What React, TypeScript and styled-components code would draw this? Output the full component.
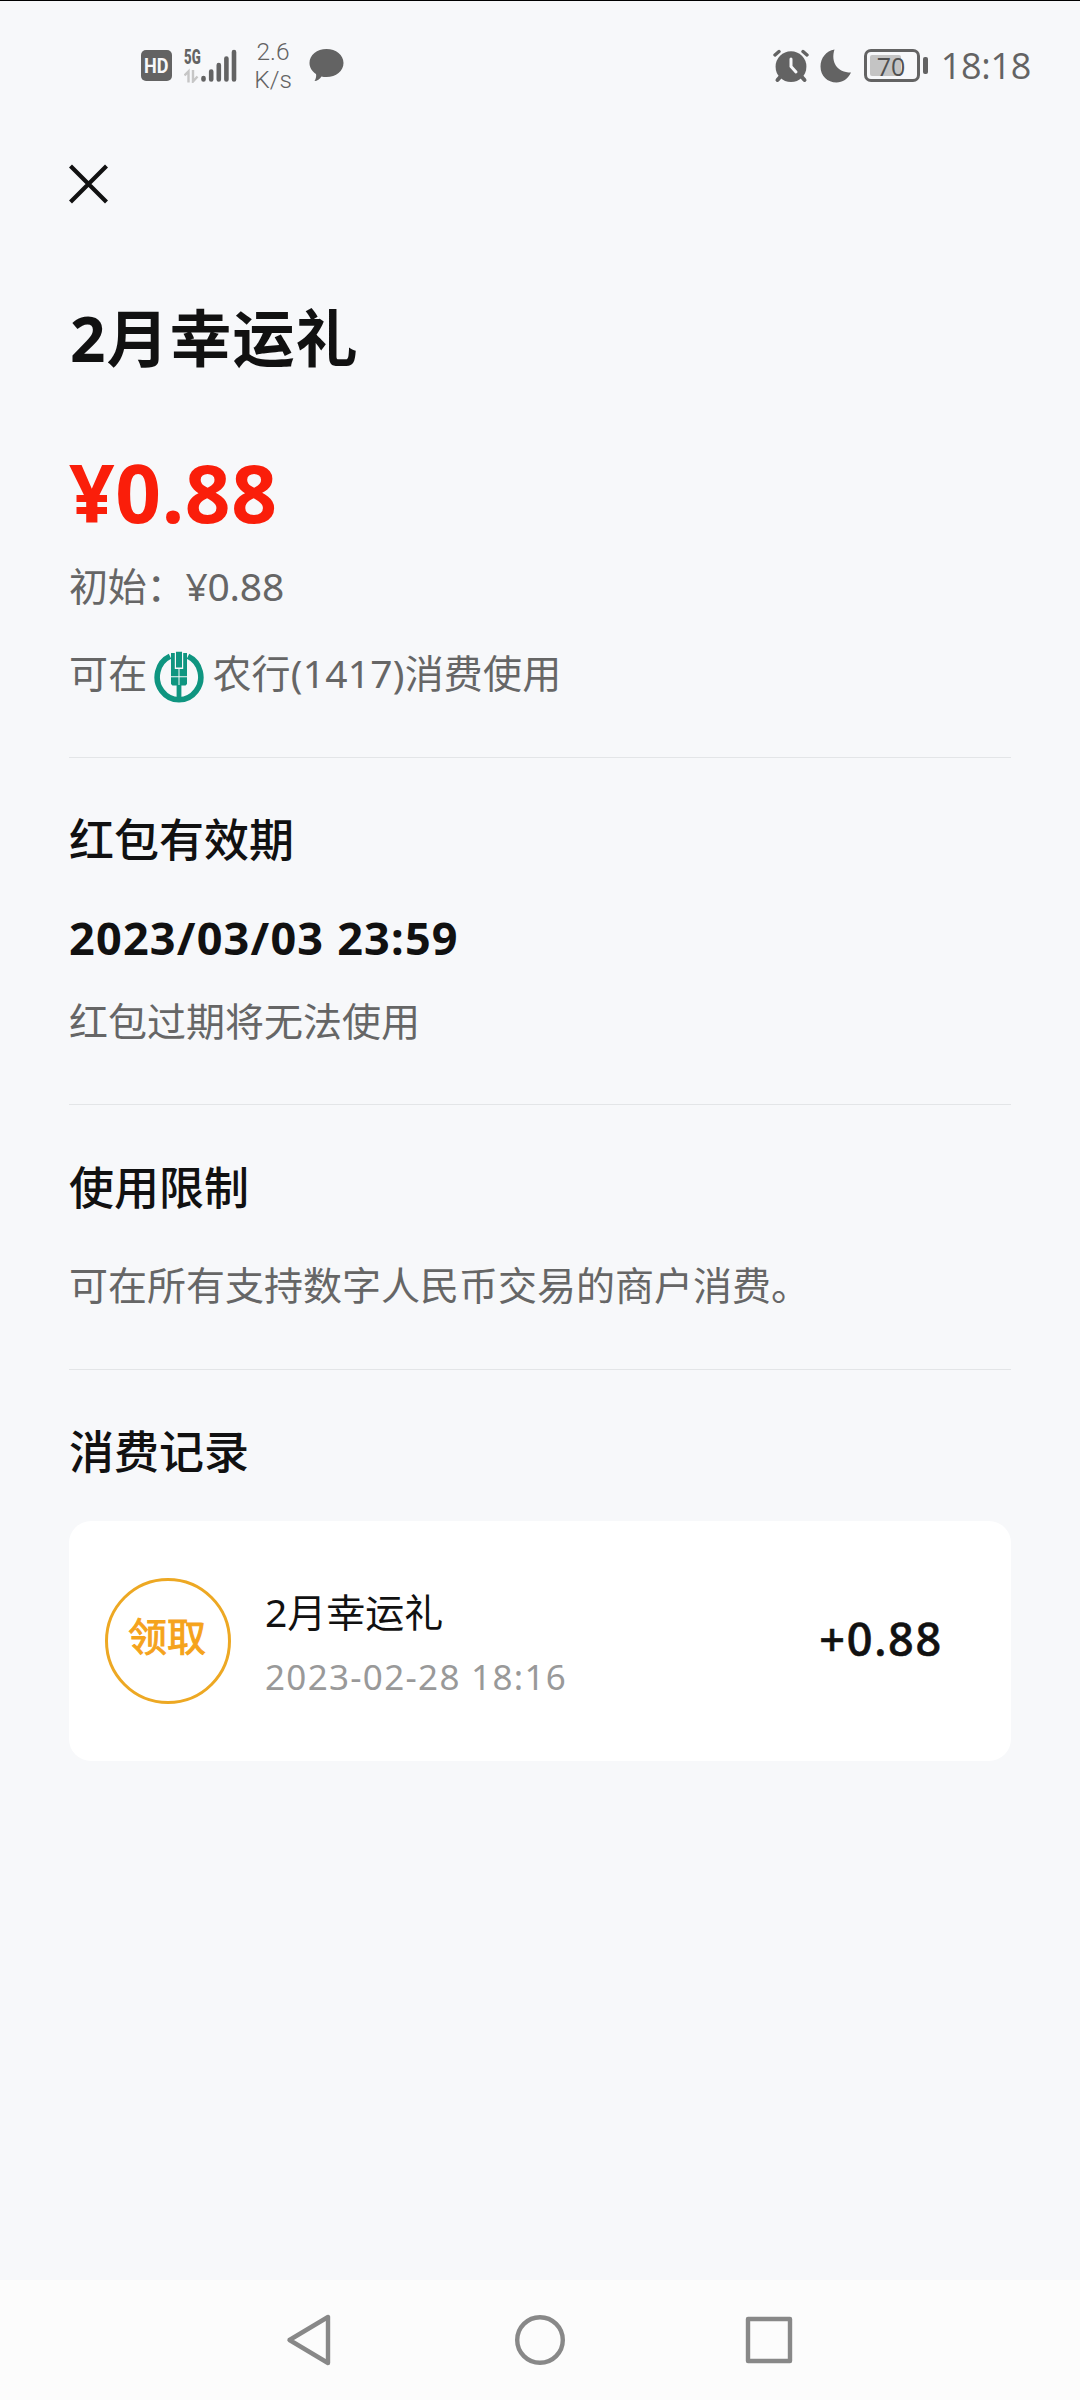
import React from "react";
import styled, { createGlobalStyle } from "styled-components";

const Global = createGlobalStyle`
  * { box-sizing: border-box; }
  body { margin: 0; background: #f7f8fa; }
`;

const Screen = styled.div`
  width: 1080px;
  height: 2400px;
  display: flex;
  flex-direction: column;
  overflow: hidden;
  background: #f7f8fa;
  border-top: 1px solid #000;
  color: #111;
  font-family: "Noto Sans", "Noto Sans CJK SC", sans-serif;
`;

const StatusBar = styled.header`
  height: 130px;
  padding: 0 49px 0 141px;
  display: flex;
  justify-content: space-between;
  color: #636363;
`;

const StatusGroup = styled.div`
  display: flex;
  align-items: center;
  height: 129px;
`;

const HdBadge = styled.span`
  width: 31px;
  height: 31px;
  border-radius: 5px;
  background: #636363;
  color: #f7f8fa;
  font: 700 21px/32px "Roboto", sans-serif;
  display: flex;
  justify-content: center;
`;

const BadgeLabel = styled.span`
  transform: scaleX(0.86);
`;

const Signal = styled.div`
  display: flex;
  width: 54px;
  margin-left: 12px;
`;

const Network = styled.div`
  width: 17px;
  height: 34px;
`;

const NetworkLabel = styled.div`
  height: 17px;
  font: 900 20px/17px "Roboto", sans-serif;
  transform: scaleX(0.66);
  transform-origin: left;
`;

const Speed = styled.div`
  width: 44px;
  margin-left: 13px;
  text-align: center;
  font: 300 24.5px/28px "Roboto", sans-serif;
`;

const Battery = styled.div`
  display: flex;
  align-items: center;
  margin-left: 12px;
  gap: 3px;
`;

const BatteryBody = styled.div`
  width: 56px;
  height: 33px;
  padding: 3px;
  border: 3px solid #636363;
  border-radius: 7px;
`;

const BatteryLevel = styled.div`
  width: 31px;
  height: 21px;
  padding-left: 7px;
  border-radius: 2px;
  background: #c4c4c4;
  font: 400 25px/22px "Open Sans", sans-serif;
  color: #505050;
`;

const BatteryTip = styled.div`
  width: 5px;
  height: 17px;
  border-radius: 2px;
  background: #636363;
`;

const Clock = styled.span`
  margin-left: 13px;
  font: 400 36px/44px "Open Sans", sans-serif;
  letter-spacing: -0.3px;
  padding-top: 1px;
`;

const Page = styled.main`
  flex: 1;
  padding: 0 69px;
  display: flex;
  flex-direction: column;
`;

const CloseButton = styled.button`
  width: 40px;
  height: 40px;
  margin-top: 33px;
  padding: 0;
  border: 0;
  background: none;
`;

const Line = styled.div<{ $size: number; $height: number; $top?: number; $track?: number; $stroke?: number }>`
  font-size: ${(p) => p.$size}px;
  height: ${(p) => p.$height}px;
  line-height: ${(p) => p.$height}px;
  margin-top: ${(p) => p.$top ?? 0}px;
  letter-spacing: ${(p) => p.$track ?? 0}px;
  -webkit-text-stroke: ${(p) => p.$stroke ?? 0}px currentColor;
  white-space: nowrap;
`;

const Title = styled(Line).attrs({ as: "h1" })`
  margin-bottom: 0;
  padding-left: 1px;
  font-weight: 700;
`;

const Price = styled(Line)`
  font-weight: 700;
  color: #fa1e0a;
`;

const Muted = styled(Line)`
  color: #666;
  display: flex;
`;

const Heading = styled(Line).attrs({ as: "h2" })`
  margin-bottom: 0;
  font-weight: 500;
`;

const Expiry = styled(Line)`
  font-weight: 700;
`;

const Divider = styled.hr<{ $top: number }>`
  width: 942px;
  height: 1px;
  flex: none;
  margin: ${(p) => p.$top}px 0 0;
  border: 0;
  background: #e3e5e7;
`;

const BankLogo = styled.svg`
  width: 50px;
  height: 52px;
  margin: 3px 8px 0 7px;
  flex: none;
`;

const Card = styled.section`
  height: 240px;
  margin-top: 39px;
  padding: 0 68px 0 36px;
  border-radius: 22px;
  background: #fff;
  display: flex;
  align-items: center;
`;

const Stamp = styled.div`
  width: 126px;
  height: 126px;
  padding-right: 2px;
  border: 3px solid #eda823;
  border-radius: 50%;
  color: #f5a31c;
  display: flex;
  justify-content: center;
`;

const Details = styled.div`
  flex: 1;
  height: 240px;
  margin-left: 34px;
`;

const Time = styled(Line)`
  color: #999;
`;

const Amount = styled(Line)`
  margin-bottom: 4px;
  font-weight: 500;
`;

const NavBar = styled.nav`
  height: 120px;
  padding: 0 284px;
  background: #fcfcfc;
  display: flex;
  justify-content: space-between;
  align-items: center;
`;

const StatusIcon = styled.svg<{ $left?: number }>`
  margin-left: ${(p) => p.$left ?? 0}px;
`;

const AlarmIcon = () => (
  <StatusIcon width="36" height="34" viewBox="0 0 36 34" fill="none" stroke="#636363" strokeWidth="4" strokeLinecap="round">
    <path d="M2 6 6 2.500M30 2.500 34 6" strokeWidth="3.400" />
    <path d="M8 27 4.500 31M28 27 31.500 31" />
    <circle cx="18" cy="17.700" r="15.400" fill="#636363" stroke="none" />
    <path d="M18 10V17.500L23 23" stroke="#f7f8fa" strokeWidth="3" />
  </StatusIcon>
);

const MoonIcon = () => (
  <StatusIcon $left={11} width="32" height="34" viewBox="0 0 32 34">
    <path d="M14.500 .5C10.500 13 17 23.500 31 23.500C28 30 22.500 33.500 16.500 33.500C7.500 33.500 .5 27 .5 17.500C.5 9 6 2 14.500 .5Z" fill="#636363" />
  </StatusIcon>
);

const BubbleIcon = () => (
  <StatusIcon $left={14} width="35" height="33" viewBox="0 0 35 33">
    <path d="M17.500 0C27 0 34.500 6 34.500 14C34.500 22 27 28 17.500 28C15.500 28 14 28 12.500 27.500C11 30 8 32 5.500 32C7 29.500 7.500 27 7 25C3 22.500 .5 18.500 .5 14C.5 6 8 0 17.500 0Z" fill="#636363" />
  </StatusIcon>
);

export default function App() {
  return (
    <>
      <Global />
      <Screen>
        <StatusBar>
          <StatusGroup>
            <HdBadge><BadgeLabel>HD</BadgeLabel></HdBadge>
            <Signal>
              <Network>
                <NetworkLabel>5G</NetworkLabel>
                <svg width="17" height="16" viewBox="0 0 17 16" fill="none" stroke="#c6c6c6" strokeWidth="2.400">
                  <path d="M0.500 8.500 4.500 4.500V15.500M9 3V14.500L13.500 9.500" />
                </svg>
              </Network>
              <svg width="36" height="34" viewBox="0 0 36 34" stroke="#636363" strokeWidth="4.600" strokeLinecap="round">
                <path d="M2.500 29V30.500M10.200 22.500V30.500M17.800 16V30.500M25.400 9.500V30.500M33 3V30.500" />
              </svg>
            </Signal>
            <Speed>2.6<br />K/s</Speed>
            <BubbleIcon />
          </StatusGroup>
          <StatusGroup>
            <AlarmIcon />
            <MoonIcon />
            <Battery>
              <BatteryBody><BatteryLevel>70</BatteryLevel></BatteryBody>
              <BatteryTip />
            </Battery>
            <Clock>18:18</Clock>
          </StatusGroup>
        </StatusBar>

        <Page>
          <CloseButton aria-label="关闭">
            <svg width="40" height="40" viewBox="0 0 40 40" stroke="#111" strokeWidth="4.200" style={{ display: "block" }}>
              <path d="M1.500 2 37.500 38M37.500 2 1.500 38" />
            </svg>
          </CloseButton>
          <Title $size={62} $height={80} $top={94} $track={1}>2月幸运礼</Title>
          <Price $size={80} $height={100} $top={64} $track={0.6}>¥0.88</Price>
          <Muted $size={39} $height={50} $top={19} $track={-0.2}>初始：¥0.88</Muted>
          <Muted $size={39} $height={50} $top={37} $track={0.2}>
            可在
            <BankLogo viewBox="0 0 50 52">
              <g fill="none" stroke="#0f9580">
                <path d="M16 5.200A21.800 22.800 0 1 0 34 5.200" strokeWidth="5.600" />
                <path d="M25 34V50" strokeWidth="4.800" />
              </g>
              <path d="M22 .8H28V16.500H22ZM17 2H20.800V18H24.500V25.300H17ZM33 2H29.200V18H25.500V25.300H33ZM17 26.300H24.500V34.500H18.500L17 33ZM33 26.300H25.500V34.500H31.500L33 33Z" fill="#0f9580" />
            </BankLogo>
            农行(1417)消费使用
          </Muted>
          <Divider $top={59} />

          <Heading $size={45} $height={60} $top={52}>红包有效期</Heading>
          <Expiry $size={45} $height={60} $top={38} $track={1.2}>2023/03/03 23:59</Expiry>
          <Muted $size={39} $height={50} $top={28}>红包过期将无法使用</Muted>
          <Divider $top={58} />

          <Heading $size={45} $height={60} $top={53}>使用限制</Heading>
          <Muted $size={39} $height={50} $top={42}>可在所有支持数字人民币交易的商户消费。</Muted>
          <Divider $top={59} />

          <Heading $size={45} $height={60} $top={52}>消费记录</Heading>
          <Card>
            <Stamp><Line $size={39} $height={50} $top={30} $stroke={1}>领取</Line></Stamp>
            <Details>
              <Line $size={39} $height={50} $top={66}>2月幸运礼</Line>
              <Time $size={35} $height={50} $top={15} $track={1.3}>2023-02-28 18:16</Time>
            </Details>
            <Amount $size={45} $height={60} $track={1.7} $stroke={0.6}>+0.88</Amount>
          </Card>
        </Page>

        <NavBar>
          <svg width="54" height="54" viewBox="0 0 54 54" fill="none" stroke="#888" strokeWidth="4.400" strokeLinejoin="round">
            <path d="M44 4V50L5.500 27Z" />
          </svg>
          <svg width="54" height="54" viewBox="0 0 54 54" fill="none" stroke="#888" strokeWidth="4.400">
            <circle cx="27" cy="27" r="22.800" />
          </svg>
          <svg width="54" height="54" viewBox="0 0 54 54" fill="none" stroke="#888" strokeWidth="4.400" strokeLinejoin="round">
            <path d="M6 6H48V48H6Z" />
          </svg>
        </NavBar>
      </Screen>
    </>
  );
}
